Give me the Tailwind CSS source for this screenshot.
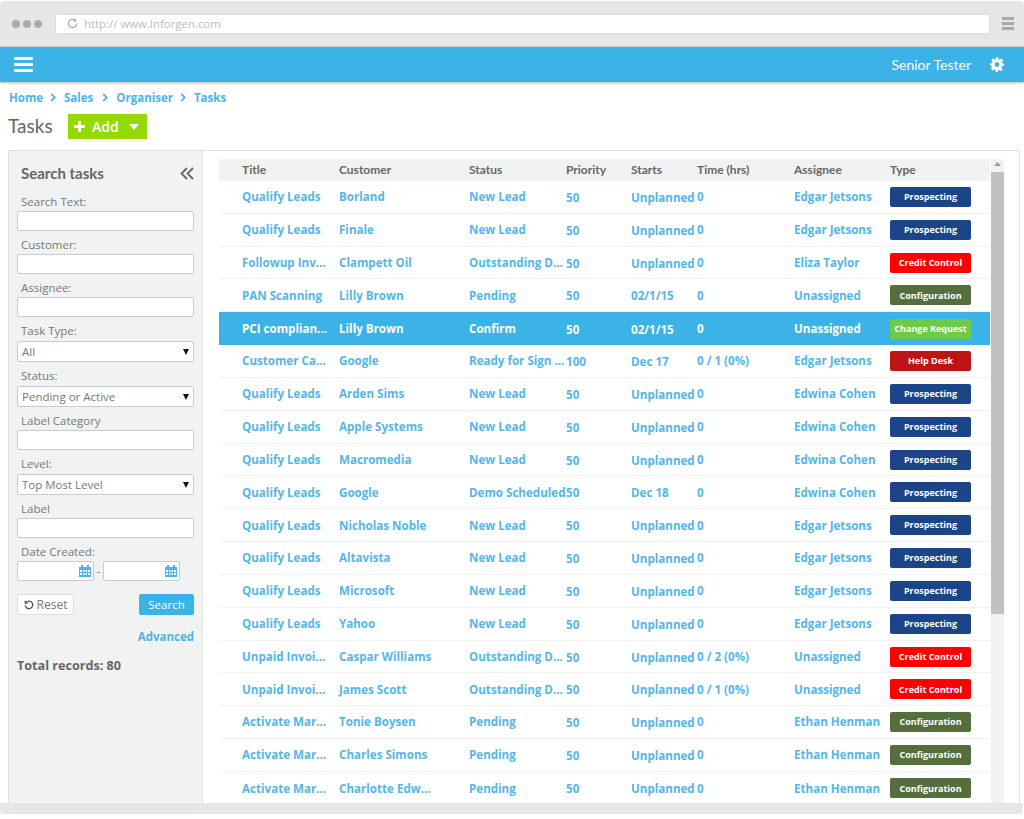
<!DOCTYPE html>
<html lang="en">
<head>
    <meta charset="UTF-8">
    <meta name="viewport" content="width=device-width, initial-scale=1.0">
    <title>Tasks</title>
    <script src="https://cdn.jsdelivr.net/npm/@tailwindcss/browser@4"></script>
</head>
<body class="bg-white font-['Open_Sans',sans-serif]">
<div class="flex flex-col h-[819px] w-[1024px] overflow-hidden">

    <!-- browser chrome -->
    <div class="flex items-center h-[46px] mt-px shrink-0 bg-[#e6e6e6] rounded-t border-b border-[#d8d8d8]">
        <div class="flex gap-[3px] pl-3 w-[55px] shrink-0">
            <span class="w-2 h-2 rounded-full bg-[#aaaaaa]"></span>
            <span class="w-2 h-2 rounded-full bg-[#aaaaaa]"></span>
            <span class="w-2 h-2 rounded-full bg-[#aaaaaa]"></span>
        </div>
        <div class="flex items-center h-5 w-[935px] bg-white rounded-[2px] border border-[#dddddd] pl-[11px] gap-[6px]">
            <svg class="w-[11px] h-[11px]" viewBox="0 0 12 12" fill="none" stroke="#aaaaaa" stroke-width="1.3"><path d="M10.5 6a4.5 4.5 0 1 1-1.4-3.3"/><path d="M9.4 0.8v2.4H7" /></svg>
            <span class="text-[11.4px] text-[#bbbbbb] whitespace-nowrap">http:// www.Inforgen.com</span>
        </div>
        <div class="flex flex-col gap-[2px] ml-3 w-3">
            <span class="h-[3px] bg-[#aaaaaa]"></span>
            <span class="h-[3px] bg-[#aaaaaa]"></span>
            <span class="h-[3px] bg-[#aaaaaa]"></span>
        </div>
    </div>

    <!-- app header -->
    <div class="flex items-center justify-between h-[35px] shrink-0 bg-[#3bb3e6] shadow-[0_1px_3px_rgba(0,0,0,0.3)] pl-[14px] pr-5">
        <div class="flex flex-col gap-[3px] w-[19px]">
            <span class="h-[3px] bg-white rounded-[1px]"></span>
            <span class="h-[3px] bg-white rounded-[1px]"></span>
            <span class="h-[3px] bg-white rounded-[1px]"></span>
        </div>
        <div class="flex items-center gap-[19px]">
            <span class="font-['Lato',sans-serif] text-[14px] text-white">Senior Tester</span>
            <svg class="w-[14px] h-[15px]" viewBox="0 0 24 24" preserveAspectRatio="none" fill="#ffffff"><path fill-rule="evenodd" d="M10 0h4l.7 3.4 2.2.9L19.8 2.400l2.800 2.800-1.900 2.900.9 2.200L24 11v3l-3.400.7-.9 2.200 1.900 2.900-2.800 2.800-2.900-1.900-2.200.9L13 24h-3l-.7-3.400-2.200-.9-2.900 1.900-2.800-2.800 1.900-2.900-.9-2.200L0 13.500v-3l3.400-.7.9-2.200-1.900-2.900 2.800-2.800 2.900 1.900 2.200-.9zM12 8a4 4 0 1 0 0 8 4 4 0 0 0 0-8z"/></svg>
        </div>
    </div>

    <!-- breadcrumb -->
    <div class="flex items-center h-[17px] mt-[7px] ml-[9px] shrink-0 text-[11.5px] font-bold text-[#4db3e8]">
        <span>Home</span>
        <svg class="w-[6px] h-[9px] ml-[7px] mr-[8px]" viewBox="0 0 6 10" fill="none" stroke="#4db3e8" stroke-width="2"><path d="M1 1l4 4-4 4"/></svg>
        <span>Sales</span>
        <svg class="w-[6px] h-[9px] ml-[9px] mr-[8px]" viewBox="0 0 6 10" fill="none" stroke="#4db3e8" stroke-width="2"><path d="M1 1l4 4-4 4"/></svg>
        <span>Organiser</span>
        <svg class="w-[6px] h-[9px] ml-[7px] mr-[8px]" viewBox="0 0 6 10" fill="none" stroke="#4db3e8" stroke-width="2"><path d="M1 1l4 4-4 4"/></svg>
        <span>Tasks</span>
    </div>

    <!-- page title -->
    <div class="flex items-center h-[25px] mt-[8px] ml-2 shrink-0">
        <h1 class="font-['Lato',sans-serif] text-[19px] text-[#666666] w-[60px]">Tasks</h1>
        <button class="flex items-center w-[79px] h-[25px] bg-[#94d900] text-white font-semibold text-[14px] pl-[6px]">
            <svg class="w-[11px] h-[11px]" viewBox="0 0 11 11" fill="#ffffff"><path d="M4 0h3v4h4v3H7v4H4V7H0V4h4z"/></svg>
            <span class="ml-[7px]">Add</span>
            <svg class="w-[10px] h-[6px] ml-[10px]" viewBox="0 0 10 6" fill="#ffffff"><path d="M0 0h10L5 6z"/></svg>
        </button>
    </div>

    <!-- main panel -->
    <div class="flex flex-1 min-h-0 mt-[11px] ml-2 mr-1 border-t border-x border-[#dfdfdf]">

        <!-- search sidebar -->
        <div class="w-[194px] shrink-0 bg-[#f1f3f3] border-r border-[#e3e5e5] px-2 text-[11.5px] text-[#777777]">
            <div class="flex items-center justify-between h-5 mt-3 pl-1">
                <span class="font-['Lato',sans-serif] font-bold text-[15px] text-[#666666]">Search tasks</span>
                <svg class="w-[14px] h-[13px]" viewBox="0 0 14 13" fill="none" stroke="#666666" stroke-width="1.800"><path d="M7 1L1.500 6.500 7 12M13 1L7.500 6.500 13 12"/></svg>
            </div>

            <label class="block h-4 leading-4 mt-[11px] pl-1">Search Text:</label>
            <input class="block w-[177px] h-5 mt-px bg-white border border-[#c3ccd4] rounded-[2px]">
            <label class="block h-4 leading-4 mt-[6px] pl-1">Customer:</label>
            <input class="block w-[177px] h-5 mt-px bg-white border border-[#c3ccd4] rounded-[2px]">
            <label class="block h-4 leading-4 mt-[6px] pl-1">Assignee:</label>
            <input class="block w-[177px] h-5 mt-px bg-white border border-[#c3ccd4] rounded-[2px]">

            <label class="block h-4 leading-4 mt-[6px] pl-1">Task Type:</label>
            <div class="relative mt-[2px]">
                <select class="block appearance-none w-[177px] h-[21px] pl-1 bg-white border border-[#c3ccd4] rounded-[2px]"><option>All</option></select>
                <svg class="absolute right-[5px] top-2 w-[6px] h-[6px]" viewBox="0 0 6 6" fill="#111111"><path d="M0 0h6L3 6z"/></svg>
            </div>
            <label class="block h-4 leading-4 mt-[6px] pl-1">Status:</label>
            <div class="relative mt-[2px]">
                <select class="block appearance-none w-[177px] h-[21px] pl-1 bg-white border border-[#c3ccd4] rounded-[2px]"><option>Pending or Active</option></select>
                <svg class="absolute right-[5px] top-2 w-[6px] h-[6px]" viewBox="0 0 6 6" fill="#111111"><path d="M0 0h6L3 6z"/></svg>
            </div>
            <label class="block h-4 leading-4 mt-[6px] pl-1">Label Category</label>
            <input class="block w-[177px] h-5 mt-px bg-white border border-[#c3ccd4] rounded-[2px]">
            <label class="block h-4 leading-4 mt-[6px] pl-1">Level:</label>
            <div class="relative mt-[2px]">
                <select class="block appearance-none w-[177px] h-[21px] pl-1 bg-white border border-[#c3ccd4] rounded-[2px]"><option>Top Most Level</option></select>
                <svg class="absolute right-[5px] top-2 w-[6px] h-[6px]" viewBox="0 0 6 6" fill="#111111"><path d="M0 0h6L3 6z"/></svg>
            </div>
            <label class="block h-4 leading-4 mt-[6px] pl-1">Label</label>
            <input class="block w-[177px] h-5 mt-px bg-white border border-[#c3ccd4] rounded-[2px]">
            <label class="block h-4 leading-4 mt-[6px] pl-1">Date Created:</label>
            <div class="flex items-center mt-px">
                <div class="flex items-center justify-end w-[77px] h-5 pr-[2px] bg-white border border-[#c3ccd4] rounded-[2px]">
                    <svg class="w-3 h-3" viewBox="0 0 12 12" fill="#4db3e8"><path fill-rule="evenodd" d="M0 2h2V0h2v2h4V0h2v2h2v10H0zM1 5v2h2V5zm3 0v2h1.500V5zm2.500 0v2H8V5zM9 5v2h2V5zM1 8v2h2V8zm3 0v2h1.500V8zm2.500 0v2H8V8zM9 8v2h2V8z"/></svg>
                </div>
                <span class="w-[9px] text-center">-</span>
                <div class="flex items-center justify-end w-[77px] h-5 pr-[2px] bg-white border border-[#c3ccd4] rounded-[2px]">
                    <svg class="w-3 h-3" viewBox="0 0 12 12" fill="#4db3e8"><path fill-rule="evenodd" d="M0 2h2V0h2v2h4V0h2v2h2v10H0zM1 5v2h2V5zm3 0v2h1.500V5zm2.500 0v2H8V5zM9 5v2h2V5zM1 8v2h2V8zm3 0v2h1.500V8zm2.500 0v2H8V8zM9 8v2h2V8z"/></svg>
                </div>
            </div>

            <div class="flex justify-between mt-[13px]">
                <button class="flex items-center justify-center gap-[3px] w-[57px] h-[21px] bg-white border border-[#dddddd] rounded-[2px] text-[12px] text-[#777777]">
                    <svg class="w-[10px] h-[10px]" viewBox="0 0 12 12" fill="none" stroke="#555555" stroke-width="1.600"><path d="M2.500 3A4.500 4.500 0 1 1 1.500 6.500"/><path d="M1.500 0.800v3h3" /></svg>
                    Reset
                </button>
                <button class="w-[55px] h-[21px] bg-[#3bb3e6] rounded-[2px] text-[11.5px] text-white">Search</button>
            </div>
            <div class="mt-[13px] text-right font-bold text-[#4db3e8]">Advanced</div>
            <div class="mt-[12px] text-[12.6px] font-bold text-[#666666]">Total records: 80</div>
        </div>

        <!-- task list -->
        <div class="flex flex-1 min-w-0 pl-4 pt-2 overflow-hidden">
            <div class="w-[771px] shrink-0 text-[11.6px] font-bold text-[#54b6ea]">
                <div class="grid grid-cols-[23px_97px_130px_97px_65px_66px_97px_96px_100px] items-center h-[22px] bg-[#f1f3f3] text-[12px] text-[#666666] font-['Lato',sans-serif] font-bold">
                    <span></span><span>Title</span><span>Customer</span><span>Status</span><span>Priority</span><span>Starts</span><span>Time (hrs)</span><span>Assignee</span><span>Type</span>
                </div>

                <div class="grid grid-cols-[23px_97px_130px_97px_65px_66px_97px_96px_100px] items-center h-[32.83px] border-b border-[#f1f1f1] whitespace-nowrap">
                    <span></span><span>Qualify Leads</span><span>Borland</span><span>New Lead</span><span class="pt-[1.5px]">50</span><span class="pt-[1.5px]">Unplanned</span><span>0</span><span>Edgar Jetsons</span><span class="flex items-center justify-center w-[81px] h-5 rounded-[2px] bg-[#1c4587] text-white text-[9px] font-bold">Prospecting</span>
                </div>
                <div class="grid grid-cols-[23px_97px_130px_97px_65px_66px_97px_96px_100px] items-center h-[32.83px] border-b border-[#f1f1f1] whitespace-nowrap">
                    <span></span><span>Qualify Leads</span><span>Finale</span><span>New Lead</span><span class="pt-[1.5px]">50</span><span class="pt-[1.5px]">Unplanned</span><span>0</span><span>Edgar Jetsons</span><span class="flex items-center justify-center w-[81px] h-5 rounded-[2px] bg-[#1c4587] text-white text-[9px] font-bold">Prospecting</span>
                </div>
                <div class="grid grid-cols-[23px_97px_130px_97px_65px_66px_97px_96px_100px] items-center h-[32.83px] border-b border-[#f1f1f1] whitespace-nowrap">
                    <span></span><span>Followup Inv...</span><span>Clampett Oil</span><span>Outstanding D...</span><span class="pt-[1.5px]">50</span><span class="pt-[1.5px]">Unplanned</span><span>0</span><span>Eliza Taylor</span><span class="flex items-center justify-center w-[81px] h-5 rounded-[2px] bg-[#ff0000] text-white text-[9px] font-bold">Credit Control</span>
                </div>
                <div class="grid grid-cols-[23px_97px_130px_97px_65px_66px_97px_96px_100px] items-center h-[32.83px] border-b border-[#f1f1f1] whitespace-nowrap">
                    <span></span><span>PAN Scanning</span><span>Lilly Brown</span><span>Pending</span><span class="pt-[1.5px]">50</span><span class="pt-[1.5px]">02/1/15</span><span>0</span><span>Unassigned</span><span class="flex items-center justify-center w-[81px] h-5 rounded-[2px] bg-[#546f3d] text-white text-[9px] font-bold">Configuration</span>
                </div>
                <div class="grid grid-cols-[23px_97px_130px_97px_65px_66px_97px_96px_100px] items-center h-[32.83px] bg-[#3bb3e6] text-white whitespace-nowrap">
                    <span></span><span>PCI complian...</span><span>Lilly Brown</span><span>Confirm</span><span class="pt-[1.5px]">50</span><span class="pt-[1.5px]">02/1/15</span><span>0</span><span>Unassigned</span><span class="flex items-center justify-center w-[81px] h-5 rounded-[2px] bg-[#6ecb46] text-white text-[9px] font-bold">Change Request</span>
                </div>
                <div class="grid grid-cols-[23px_97px_130px_97px_65px_66px_97px_96px_100px] items-center h-[32.83px] border-b border-[#f1f1f1] whitespace-nowrap">
                    <span></span><span>Customer Ca...</span><span>Google</span><span>Ready for Sign ...</span><span class="pt-[1.5px]">100</span><span class="pt-[1.5px]">Dec 17</span><span>0 / 1 (0%)</span><span>Edgar Jetsons</span><span class="flex items-center justify-center w-[81px] h-5 rounded-[2px] bg-[#bd1515] text-white text-[9px] font-bold">Help Desk</span>
                </div>
                <div class="grid grid-cols-[23px_97px_130px_97px_65px_66px_97px_96px_100px] items-center h-[32.83px] border-b border-[#f1f1f1] whitespace-nowrap">
                    <span></span><span>Qualify Leads</span><span>Arden Sims</span><span>New Lead</span><span class="pt-[1.5px]">50</span><span class="pt-[1.5px]">Unplanned</span><span>0</span><span>Edwina Cohen</span><span class="flex items-center justify-center w-[81px] h-5 rounded-[2px] bg-[#1c4587] text-white text-[9px] font-bold">Prospecting</span>
                </div>
                <div class="grid grid-cols-[23px_97px_130px_97px_65px_66px_97px_96px_100px] items-center h-[32.83px] border-b border-[#f1f1f1] whitespace-nowrap">
                    <span></span><span>Qualify Leads</span><span>Apple Systems</span><span>New Lead</span><span class="pt-[1.5px]">50</span><span class="pt-[1.5px]">Unplanned</span><span>0</span><span>Edwina Cohen</span><span class="flex items-center justify-center w-[81px] h-5 rounded-[2px] bg-[#1c4587] text-white text-[9px] font-bold">Prospecting</span>
                </div>
                <div class="grid grid-cols-[23px_97px_130px_97px_65px_66px_97px_96px_100px] items-center h-[32.83px] border-b border-[#f1f1f1] whitespace-nowrap">
                    <span></span><span>Qualify Leads</span><span>Macromedia</span><span>New Lead</span><span class="pt-[1.5px]">50</span><span class="pt-[1.5px]">Unplanned</span><span>0</span><span>Edwina Cohen</span><span class="flex items-center justify-center w-[81px] h-5 rounded-[2px] bg-[#1c4587] text-white text-[9px] font-bold">Prospecting</span>
                </div>
                <div class="grid grid-cols-[23px_97px_130px_97px_65px_66px_97px_96px_100px] items-center h-[32.83px] border-b border-[#f1f1f1] whitespace-nowrap">
                    <span></span><span>Qualify Leads</span><span>Google</span><span>Demo Scheduled</span><span class="pt-[1.5px]">50</span><span class="pt-[1.5px]">Dec 18</span><span>0</span><span>Edwina Cohen</span><span class="flex items-center justify-center w-[81px] h-5 rounded-[2px] bg-[#1c4587] text-white text-[9px] font-bold">Prospecting</span>
                </div>
                <div class="grid grid-cols-[23px_97px_130px_97px_65px_66px_97px_96px_100px] items-center h-[32.83px] border-b border-[#f1f1f1] whitespace-nowrap">
                    <span></span><span>Qualify Leads</span><span>Nicholas Noble</span><span>New Lead</span><span class="pt-[1.5px]">50</span><span class="pt-[1.5px]">Unplanned</span><span>0</span><span>Edgar Jetsons</span><span class="flex items-center justify-center w-[81px] h-5 rounded-[2px] bg-[#1c4587] text-white text-[9px] font-bold">Prospecting</span>
                </div>
                <div class="grid grid-cols-[23px_97px_130px_97px_65px_66px_97px_96px_100px] items-center h-[32.83px] border-b border-[#f1f1f1] whitespace-nowrap">
                    <span></span><span>Qualify Leads</span><span>Altavista</span><span>New Lead</span><span class="pt-[1.5px]">50</span><span class="pt-[1.5px]">Unplanned</span><span>0</span><span>Edgar Jetsons</span><span class="flex items-center justify-center w-[81px] h-5 rounded-[2px] bg-[#1c4587] text-white text-[9px] font-bold">Prospecting</span>
                </div>
                <div class="grid grid-cols-[23px_97px_130px_97px_65px_66px_97px_96px_100px] items-center h-[32.83px] border-b border-[#f1f1f1] whitespace-nowrap">
                    <span></span><span>Qualify Leads</span><span>Microsoft</span><span>New Lead</span><span class="pt-[1.5px]">50</span><span class="pt-[1.5px]">Unplanned</span><span>0</span><span>Edgar Jetsons</span><span class="flex items-center justify-center w-[81px] h-5 rounded-[2px] bg-[#1c4587] text-white text-[9px] font-bold">Prospecting</span>
                </div>
                <div class="grid grid-cols-[23px_97px_130px_97px_65px_66px_97px_96px_100px] items-center h-[32.83px] border-b border-[#f1f1f1] whitespace-nowrap">
                    <span></span><span>Qualify Leads</span><span>Yahoo</span><span>New Lead</span><span class="pt-[1.5px]">50</span><span class="pt-[1.5px]">Unplanned</span><span>0</span><span>Edgar Jetsons</span><span class="flex items-center justify-center w-[81px] h-5 rounded-[2px] bg-[#1c4587] text-white text-[9px] font-bold">Prospecting</span>
                </div>
                <div class="grid grid-cols-[23px_97px_130px_97px_65px_66px_97px_96px_100px] items-center h-[32.83px] border-b border-[#f1f1f1] whitespace-nowrap">
                    <span></span><span>Unpaid Invoi...</span><span>Caspar Williams</span><span>Outstanding D...</span><span class="pt-[1.5px]">50</span><span class="pt-[1.5px]">Unplanned</span><span>0 / 2 (0%)</span><span>Unassigned</span><span class="flex items-center justify-center w-[81px] h-5 rounded-[2px] bg-[#ff0000] text-white text-[9px] font-bold">Credit Control</span>
                </div>
                <div class="grid grid-cols-[23px_97px_130px_97px_65px_66px_97px_96px_100px] items-center h-[32.83px] border-b border-[#f1f1f1] whitespace-nowrap">
                    <span></span><span>Unpaid Invoi...</span><span>James Scott</span><span>Outstanding D...</span><span class="pt-[1.5px]">50</span><span class="pt-[1.5px]">Unplanned</span><span>0 / 1 (0%)</span><span>Unassigned</span><span class="flex items-center justify-center w-[81px] h-5 rounded-[2px] bg-[#ff0000] text-white text-[9px] font-bold">Credit Control</span>
                </div>
                <div class="grid grid-cols-[23px_97px_130px_97px_65px_66px_97px_96px_100px] items-center h-[32.83px] border-b border-[#f1f1f1] whitespace-nowrap">
                    <span></span><span>Activate Mar...</span><span>Tonie Boysen</span><span>Pending</span><span class="pt-[1.5px]">50</span><span class="pt-[1.5px]">Unplanned</span><span>0</span><span>Ethan Henman</span><span class="flex items-center justify-center w-[81px] h-5 rounded-[2px] bg-[#546f3d] text-white text-[9px] font-bold">Configuration</span>
                </div>
                <div class="grid grid-cols-[23px_97px_130px_97px_65px_66px_97px_96px_100px] items-center h-[32.83px] border-b border-[#f1f1f1] whitespace-nowrap">
                    <span></span><span>Activate Mar...</span><span>Charles Simons</span><span>Pending</span><span class="pt-[1.5px]">50</span><span class="pt-[1.5px]">Unplanned</span><span>0</span><span>Ethan Henman</span><span class="flex items-center justify-center w-[81px] h-5 rounded-[2px] bg-[#546f3d] text-white text-[9px] font-bold">Configuration</span>
                </div>
                <div class="grid grid-cols-[23px_97px_130px_97px_65px_66px_97px_96px_100px] items-center h-[32.83px] whitespace-nowrap">
                    <span></span><span>Activate Mar...</span><span>Charlotte Edw...</span><span>Pending</span><span class="pt-[1.5px]">50</span><span class="pt-[1.5px]">Unplanned</span><span>0</span><span>Ethan Henman</span><span class="flex items-center justify-center w-[81px] h-5 rounded-[2px] bg-[#546f3d] text-white text-[9px] font-bold">Configuration</span>
                </div>
            </div>

            <!-- scrollbar -->
            <div class="flex flex-col items-center w-[13px] ml-px shrink-0 bg-[#f1f1f1]">
                <svg class="w-[7px] h-1 mt-[3px] mb-[6px]" viewBox="0 0 7 4" fill="#999999"><path d="M3.500 0L7 4H0z"/></svg>
                <div class="w-full h-[442px] bg-[#c1c1c1]"></div>
            </div>
        </div>
    </div>

    <!-- browser bottom edge -->
    <div class="h-[11px] mb-[5px] mr-px shrink-0 bg-[#e6e6e6] rounded-b"></div>
</div>
</body>
</html>
